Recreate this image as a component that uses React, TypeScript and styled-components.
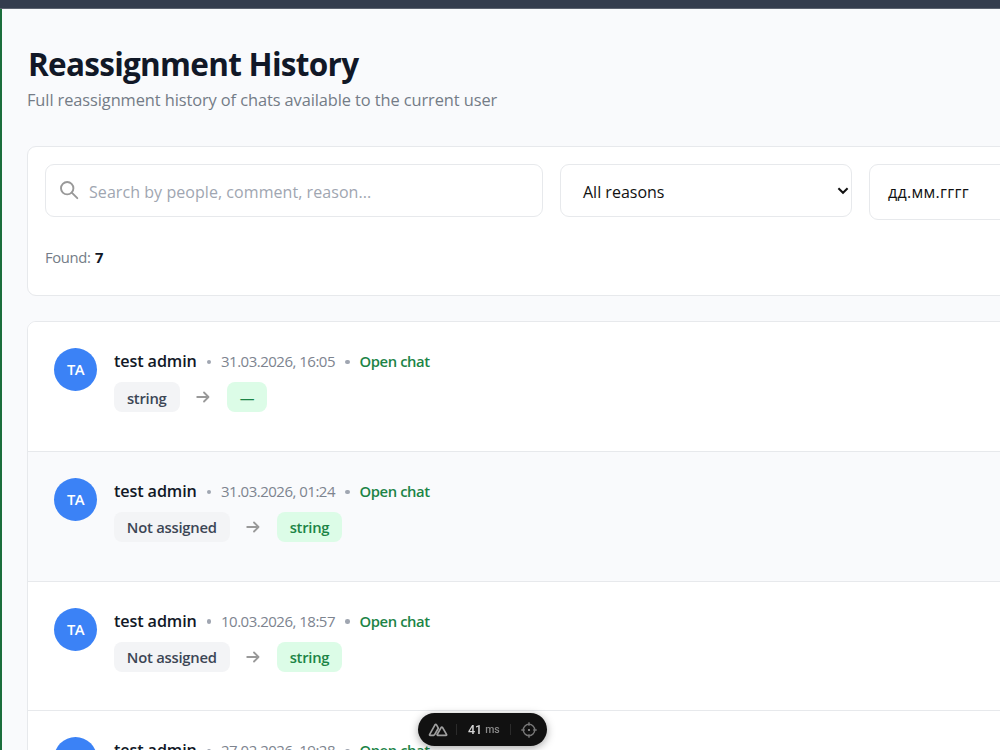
import React from "react";
import styled, { createGlobalStyle } from "styled-components";

const GlobalStyle = createGlobalStyle`
  *, *::before, *::after { box-sizing: border-box; }
  html, body, #root { height: 100%; }
  body {
    margin: 0;
    overflow: hidden;
    background: #f9fafb;
    font-family: "Segoe UI", "Open Sans", "Noto Sans", sans-serif;
    color: #111827;
  }
  h1, p { margin: 0; }
`;

const Shell = styled.div`
  height: 750px;
  overflow: hidden;
  display: flex;
  flex-direction: column;
`;

const TopBar = styled.div`
  flex: none;
  height: 9px;
  background: #343d4e;
  border-bottom: 1px solid #5c6370;
`;

const Main = styled.main`
  flex: 1;
  min-height: 0;
  overflow: hidden;
  border-left: 2px solid #1b6e3c;
  background: #f9fafc;
  padding: 35px 0 0 25px;
`;

const Title = styled.h1`
  padding-left: 1px;
  font-size: 31.5px;
  line-height: 40px;
  font-weight: 700;
  letter-spacing: -0.72px;
  white-space: nowrap;
`;

const Subtitle = styled.p`
  margin-top: 4px;
  font-size: 16.4px;
  line-height: 24px;
  color: #747c87;
  letter-spacing: -0.09px;
  white-space: nowrap;
`;

const Card = styled.section`
  width: 1100px;
  background: #fff;
  border: 1px solid #e7e9ec;
  border-radius: 9px;
`;

const FilterCard = styled(Card)`
  height: 150px;
  margin-top: 34px;
  padding: 17px;
`;

const Filters = styled.div`
  display: flex;
  align-items: flex-start;
  gap: 17px;
`;

const Field = styled.div<{ $width: number; $height: number; $left: number; $gap?: number }>`
  flex: none;
  display: flex;
  align-items: center;
  gap: ${(p) => p.$gap ?? 0}px;
  width: ${(p) => p.$width}px;
  height: ${(p) => p.$height}px;
  padding: 0 3px 0 ${(p) => p.$left}px;
  border: 1px solid #e7e9ec;
  border-radius: 9px;
  background: #fff;
`;

const FieldText = styled.span<{ $muted?: boolean; $track?: number; $top?: number }>`
  flex: 1;
  padding-top: ${(p) => p.$top ?? 2}px;
  font-size: 16px;
  line-height: 24px;
  white-space: nowrap;
  letter-spacing: ${(p) => p.$track ?? 0}px;
  color: ${(p) => (p.$muted ? "#a0a6b1" : "#111")};
`;

const SelectChevron = styled.svg`
  flex: none;
  width: 12px;
  height: 8px;
  margin: 1px -1px 0 0;
`;

const Found = styled.p`
  margin-top: 25px;
  font-size: 14.8px;
  line-height: 24px;
  letter-spacing: -0.35px;
  color: #747c87;
`;

const Count = styled.strong`
  margin-left: 1px;
  font-weight: 700;
  color: #111827;
`;

const ListCard = styled(Card)`
  margin-top: 25px;
  overflow: hidden;
`;

const Row = styled.article<{ $shaded?: boolean }>`
  display: flex;
  gap: 17px;
  height: 129.75px;
  padding: 26px;
  border-bottom: 1px solid #e7e9ec;
  background: ${(p) => (p.$shaded ? "#f9fafc" : "#fff")};
`;

const Avatar = styled.div`
  flex: none;
  display: flex;
  align-items: center;
  justify-content: center;
  width: 43px;
  height: 43px;
  padding-bottom: 1px;
  border-radius: 50%;
  background: #3b82f6;
  color: #fff;
  font-size: 14.8px;
  font-weight: 600;
  letter-spacing: -0.5px;
`;

const Details = styled.div`
  display: flex;
  flex-direction: column;
  gap: 8px;
`;

const Meta = styled.div`
  display: flex;
  align-items: center;
  height: 26px;
  white-space: nowrap;
`;

const Name = styled.span`
  width: 82.5px;
  font-size: 16.2px;
  font-weight: 600;
  letter-spacing: -0.12px;
`;

const Dot = styled.i`
  width: 4.5px;
  height: 4.5px;
  margin: 2px 10px 0;
  border-radius: 50%;
  background: #a0a6b1;
`;

const Time = styled.time`
  width: 114px;
  font-size: 15px;
  letter-spacing: -0.5px;
  color: #7d848f;
`;

const ChatLink = styled.a`
  font-size: 14.8px;
  font-weight: 600;
  letter-spacing: -0.4px;
  color: #1c8446;
`;

const Transfer = styled.div`
  display: flex;
  align-items: center;
`;

const Badge = styled.span<{ $target?: boolean; $width: number }>`
  display: flex;
  align-items: center;
  justify-content: center;
  width: ${(p) => p.$width}px;
  height: 30px;
  padding-top: 1px;
  border-radius: 8px;
  font-size: 14.8px;
  font-weight: 600;
  letter-spacing: -0.25px;
  white-space: nowrap;
  background: ${(p) => (p.$target ? "#dcfce7" : "#f3f4f6")};
  color: ${(p) => (p.$target ? "#1c8446" : "#3c4655")};
`;

const ArrowIcon = styled.svg`
  width: 14px;
  height: 12px;
  margin: 0 17px 0 16.5px;
`;

const DevTools = styled.div`
  position: fixed;
  left: 418px;
  top: 713px;
  display: flex;
  align-items: center;
  width: 129px;
  height: 33px;
  padding: 0 10px;
  border-radius: 17px;
  background: #111;
  box-shadow: 0 2px 8px rgba(0, 0, 0, 0.35);
  color: #d4d4d4;
  font-family: Roboto, sans-serif;

  svg { flex: none; }
`;

const Divider = styled.span`
  flex: none;
  width: 1px;
  height: 11px;
  margin: 0 10px 0 8px;
  background: #2b2b2b;
`;

const Timing = styled.span`
  flex: 1;
  display: flex;
  align-items: baseline;
  gap: 3px;
  padding-left: 1px;
  font-size: 12.5px;
  font-weight: 500;
`;

const Unit = styled.small`
  position: relative;
  top: -1px;
  font-size: 10.5px;
  letter-spacing: -0.2px;
  color: #8a8a8a;
`;

const entries = [
  { from: "string", fromWidth: 65.5, to: "—", toWidth: 40, time: "31.03.2026, 16:05" },
  { from: "Not assigned", fromWidth: 115.5, to: "string", toWidth: 65, time: "31.03.2026, 01:24", shaded: true },
  { from: "Not assigned", fromWidth: 115.5, to: "string", toWidth: 65, time: "10.03.2026, 18:57" },
  { from: "Not assigned", fromWidth: 115.5, to: "string", toWidth: 65, time: "27.02.2026, 19:28" },
];

export default function App() {
  return (
    <Shell>
      <GlobalStyle />
      <TopBar />
      <Main>
        <Title>Reassignment History</Title>
        <Subtitle>Full reassignment history of chats available to the current user</Subtitle>
        <FilterCard>
          <Filters>
            <Field $width={498} $height={53} $left={14} $gap={10}>
              <svg width="19" height="19" viewBox="0 0 19 19" fill="none" stroke="#999" strokeWidth="1.9" strokeLinecap="round">
                <circle cx="7.2" cy="7.2" r="6.2" />
                <path d="M11.8 11.7 17.3 17.2" />
              </svg>
              <FieldText $muted $track={0.06}>Search by people, comment, reason...</FieldText>
            </Field>
            <Field $width={292} $height={53} $left={22}>
              <FieldText>All reasons</FieldText>
              <SelectChevron viewBox="0 0 12 8" fill="none" stroke="#111" strokeWidth="2">
                <path d="M1.4 1.3 6 5.8 10.6 1.3" />
              </SelectChevron>
            </Field>
            <Field $width={292} $height={56} $left={18}>
              <FieldText $track={0.3} $top={0}>дд.мм.гггг</FieldText>
            </Field>
          </Filters>
          <Found>
            Found: <Count>7</Count>
          </Found>
        </FilterCard>
        <ListCard>
          {entries.map((e) => (
            <Row key={e.time} $shaded={e.shaded}>
              <Avatar>TA</Avatar>
              <Details>
                <Meta>
                  <Name>test admin</Name>
                  <Dot />
                  <Time>{e.time}</Time>
                  <Dot />
                  <ChatLink>Open chat</ChatLink>
                </Meta>
                <Transfer>
                  <Badge $width={e.fromWidth}>{e.from}</Badge>
                  <ArrowIcon viewBox="0 0 14 12" fill="none" stroke="#999" strokeWidth="1.8" strokeLinecap="round" strokeLinejoin="round">
                    <path d="M1.2 6H12.4M8 1.5 12.5 6 8 10.5" />
                  </ArrowIcon>
                  <Badge $target $width={e.toWidth}>{e.to}</Badge>
                </Transfer>
              </Details>
            </Row>
          ))}
        </ListCard>
      </Main>
      <DevTools>
        <svg width="20" height="14" viewBox="0 0 20 14" fill="none" stroke="#a0a0a0" strokeWidth="1.7" strokeLinecap="round" strokeLinejoin="round">
          <path d="M5.6 12.3H2.2Q1.2 12.3 1.7 11.3L7 1.9Q7.8.9 8.5 1.9L10.3 5.2L6.6 11.6Q6.1 12.3 5.6 12.3M9.6 12.3H18Q19 12.3 18.5 11.4L14.6 4.6Q13.8 3.6 13.1 4.6L9 11.7" />
        </svg>
        <Divider />
        <Timing>
          41 <Unit>ms</Unit>
        </Timing>
        <Divider />
        <svg width="16" height="16" viewBox="0 0 16 16" fill="none" stroke="#777" strokeWidth="1.4">
          <circle cx="8" cy="8" r="5.7" />
          <path d="M8 .3V3.8M8 12.2V15.7M.3 8H3.8M12.2 8H15.7" />
          <circle cx="8" cy="8" r="1.1" fill="#999" stroke="none" />
        </svg>
      </DevTools>
    </Shell>
  );
}
